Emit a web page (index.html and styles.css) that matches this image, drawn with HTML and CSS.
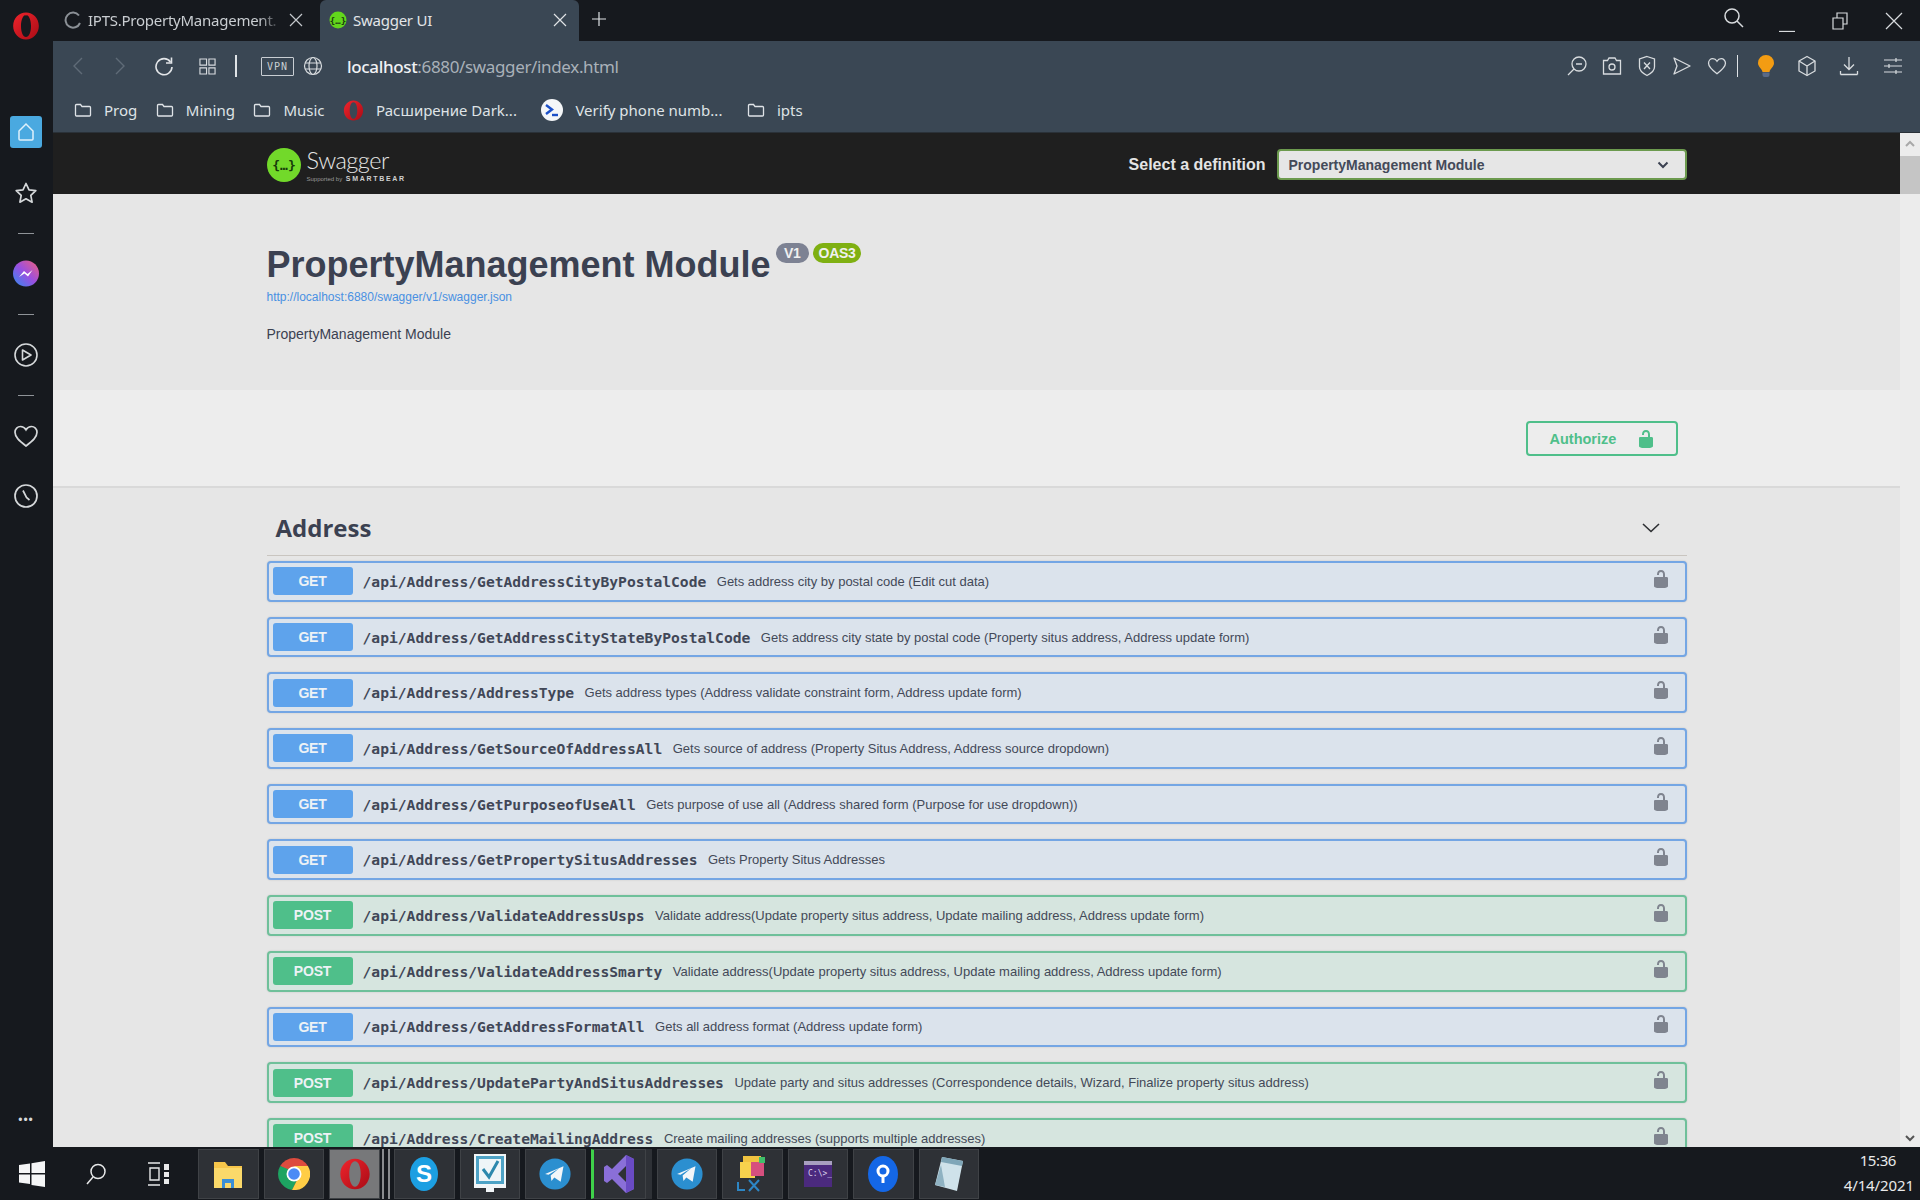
FILE: index.html
```html
<!DOCTYPE html>
<html lang="en">
<head>
<meta charset="utf-8">
<title>Swagger UI</title>
<link rel="stylesheet" href="styles.css">
</head>
<body>
<svg class="defs" aria-hidden="true">
  <defs>
    <symbol id="lock" viewBox="0 0 20 20"><path d="M15.8 8H14V5.6C14 2.703 12.665 1 10 1 7.334 1 6 2.703 6 5.6V6h2v-.801C8 3.754 8.797 3 10 3c1.203 0 2 .754 2 2.199V8H4c-.553 0-1 .646-1 1.199V17c0 .549.428 1.139.951 1.307l1.197.387C5.672 18.861 6.55 19 7.1 19h5.8c.549 0 1.428-.139 1.951-.307l1.196-.387c.524-.167.953-.757.953-1.306V9.199C17 8.646 16.352 8 15.8 8z"/></symbol>
    <symbol id="folder" viewBox="0 0 18 16"><path d="M1.500 3.500a1 1 0 0 1 1-1h4l1.500 2h7.500a1 1 0 0 1 1 1v7.500a1 1 0 0 1-1 1h-13a1 1 0 0 1-1-1z" fill="none" stroke="#dfe3e7" stroke-width="1.300"/></symbol>
    <linearGradient id="opg" x1="0" y1="0" x2="1" y2="1"><stop offset="0" stop-color="#f0242c"/><stop offset="1" stop-color="#a80c16"/></linearGradient>
    <symbol id="opera" viewBox="0 0 24 24"><path fill-rule="evenodd" fill="url(#opg)" d="M12 .5c6 0 11 5 11 11.500s-5 11.500-11 11.500S1 18.500 1 12 6 .5 12 .5zM12 2.500c-2.500 0-4.300 4-4.300 9.500s1.800 9.500 4.300 9.500 4.300-4 4.300-9.500-1.800-9.500-4.300-9.500z"/></symbol>
    <symbol id="telegram" viewBox="0 0 24 24"><circle cx="12" cy="12" r="11" fill="#2b8fd0"/><path d="M5 12l13-5.500-2 11-4.500-3-2 2.500-.6-4 6-5-7.500 4.500z" fill="#f2f6f9"/></symbol>
    <linearGradient id="msgr" x1="0" y1="1" x2="1" y2="0"><stop offset="0" stop-color="#2f8cf0"/><stop offset=".5" stop-color="#9a4fe0"/><stop offset="1" stop-color="#f0607a"/></linearGradient>
  </defs>
</svg>

<div class="screen">
  <div class="desk">
    <aside class="side">
      <div class="side-logo"><svg width="28" height="28"><use href="#opera"/></svg></div>
      <div class="side-home">
        <svg width="20" height="20" viewBox="0 0 20 20"><path d="M3 9l7-7 7 7v8a1 1 0 0 1-1 1H4a1 1 0 0 1-1-1z" fill="none" stroke="#dff1fb" stroke-width="1.500"/></svg>
      </div>
      <div class="side-item star"><svg width="24" height="24" viewBox="0 0 24 24"><path d="M12 2.500l3 6.300 6.800.9-5 4.700 1.300 6.800-6.100-3.400-6.100 3.400 1.300-6.800-5-4.700 6.800-.9z" fill="none" stroke="#d5d8da" stroke-width="1.700" stroke-linejoin="round"/></svg></div>
      <div class="side-dash"></div>
      <div class="side-item"><svg width="28" height="28" viewBox="0 0 28 28"><circle cx="14" cy="13.500" r="13" fill="url(#msgr)"/><path d="M7 17l5-6 3.500 3 5-4-4.500 6.500-3.500-3z" fill="#fff"/></svg></div>
      <div class="side-dash"></div>
      <div class="side-item"><svg width="26" height="26" viewBox="0 0 26 26"><circle cx="13" cy="13" r="11" fill="none" stroke="#d5d8da" stroke-width="1.600"/><path d="M9.500 8l8.500 5-8.500 5z" fill="none" stroke="#d5d8da" stroke-width="1.600" stroke-linejoin="round"/></svg></div>
      <div class="side-dash"></div>
      <div class="side-item"><svg width="26" height="24" viewBox="0 0 26 24"><path d="M13 22C6 16.500 2 13 2 8.300 2 4.800 4.600 2.500 7.500 2.500c2.300 0 4.300 1.300 5.500 3.300 1.200-2 3.200-3.300 5.500-3.300C21.400 2.500 24 4.800 24 8.300 24 13 20 16.500 13 22z" fill="none" stroke="#d5d8da" stroke-width="1.700"/></svg></div>
      <div class="side-item clock"><svg width="26" height="26" viewBox="0 0 26 26"><circle cx="13" cy="13" r="11" fill="none" stroke="#d5d8da" stroke-width="1.700"/><path d="M10 7.500l3.500 7 3 2.500" fill="none" stroke="#d5d8da" stroke-width="1.700"/></svg></div>
      <div class="side-more">•••</div>
    </aside>

    <main class="browser">
      <div class="tabs">
        <div class="tab">
          <svg class="tab-ico" width="18" height="18" viewBox="0 0 18 18"><path d="M15 4.500A7.500 7.500 0 1 0 16 12" fill="none" stroke="#8b9096" stroke-width="2"/></svg>
          <span class="tab-title fade">IPTS.PropertyManagement.</span>
          <svg class="tab-x" width="16" height="16" viewBox="0 0 16 16"><path d="M2 2l12 12M14 2L2 14" stroke="#c4c8cc" stroke-width="1.200"/></svg>
        </div>
        <div class="tab active">
          <svg class="tab-ico" width="18" height="18" viewBox="0 0 18 18"><circle cx="9" cy="9" r="8.500" fill="#62d61c"/><text x="9" y="12.500" class="fav-text">{…}</text></svg>
          <span class="tab-title">Swagger UI</span>
          <svg class="tab-x" width="16" height="16" viewBox="0 0 16 16"><path d="M2 2l12 12M14 2L2 14" stroke="#dfe3e6" stroke-width="1.200"/></svg>
        </div>
        <svg class="tab-new" width="16" height="16" viewBox="0 0 16 16"><path d="M8 1v14M1 8h14" stroke="#dfe3e6" stroke-width="1.200"/></svg>
        <div class="win">
          <svg class="win-search" width="22" height="22" viewBox="0 0 22 22"><circle cx="9" cy="9" r="7" fill="none" stroke="#d8dbde" stroke-width="1.500"/><path d="M14 14l6 6" stroke="#d8dbde" stroke-width="1.500"/></svg>
          <svg class="win-min" width="16" height="16" viewBox="0 0 16 16"><path d="M0 15.500h16" stroke="#d8dbde" stroke-width="1.300"/></svg>
          <svg class="win-max" width="16" height="18" viewBox="0 0 16 18"><path d="M1 6h10v11H1zM5 6V1h10v11h-4" fill="none" stroke="#d8dbde" stroke-width="1.200"/></svg>
          <svg class="win-close" width="18" height="18" viewBox="0 0 18 18"><path d="M1 1l16 16M17 1L1 17" stroke="#d8dbde" stroke-width="1.200"/></svg>
        </div>
      </div>

      <div class="chrome">
        <div class="toolbar">
          <span class="tb w42"><svg width="12" height="20" viewBox="0 0 12 20"><path d="M10 2L2 10l8 8" fill="none" stroke="#5f6b77" stroke-width="1.400"/></svg></span>
          <span class="tb w42"><svg width="12" height="20" viewBox="0 0 12 20"><path d="M2 2l8 8-8 8" fill="none" stroke="#5f6b77" stroke-width="1.400"/></svg></span>
          <span class="tb w46"><svg width="20" height="20" viewBox="0 0 20 20"><path d="M16.500 6A8 8 0 1 0 18 11" fill="none" stroke="#e2e5e8" stroke-width="1.600"/><path d="M17.500 1.500V7H12" fill="none" stroke="#e2e5e8" stroke-width="1.600"/></svg></span>
          <span class="tb w40"><svg width="17" height="17" viewBox="0 0 18 18"><path d="M1 1h7v6.500H1zM10.500 1H17v6.500h-6.500zM1 10.500h7V17H1zM10.500 10.500H17V17h-6.500z" fill="none" stroke="#d8dcdf" stroke-width="1.200"/></svg></span>
          <span class="tb w18"><span class="tb-sep"></span></span>
          <span class="vpn">VPN</span>
          <span class="tb w38"><svg width="20" height="20" viewBox="0 0 20 20"><g fill="none" stroke="#d8dcdf" stroke-width="1.200"><circle cx="10" cy="10" r="8.500"/><ellipse cx="10" cy="10" rx="4" ry="8.500"/><path d="M2 7h16M2 13h16"/></g></svg></span>
          <span class="url"><b>localhost</b>:6880/swagger/index.html</span>
          <div class="tb-right">
            <span class="tb w35"><svg width="22" height="22" viewBox="0 0 22 22"><g fill="none" stroke="#d8dcdf" stroke-width="1.300"><circle cx="13" cy="9" r="7"/><path d="M8 14l-6 6M10 9h6"/></g></svg></span>
            <span class="tb w35"><svg width="20" height="20" viewBox="0 0 20 20"><g fill="none" stroke="#d8dcdf" stroke-width="1.300"><path d="M1.500 4.500h4L7 2h6l1.500 2.500h4V18h-17z"/><circle cx="10" cy="11" r="3"/></g></svg></span>
            <span class="tb w35"><svg width="18" height="22" viewBox="0 0 18 22"><g fill="none" stroke="#d8dcdf" stroke-width="1.300"><path d="M9 1.500l7.500 2.500v8c0 4-3.500 6.500-7.500 8.500-4-2-7.500-4.500-7.500-8.500V4z"/><path d="M6 7.500l6 6.500M12 7.500L6 14"/></g></svg></span>
            <span class="tb w35"><svg width="20" height="20" viewBox="0 0 20 20"><path d="M2 2l16 8-16 8 3-8z" fill="none" stroke="#d8dcdf" stroke-width="1.300" stroke-linejoin="round"/></svg></span>
            <span class="tb w35"><svg width="20" height="20" viewBox="0 0 26 24"><path d="M13 22C6 16.500 2 13 2 8.300 2 4.800 4.600 2.500 7.500 2.500c2.300 0 4.300 1.300 5.500 3.300 1.200-2 3.200-3.300 5.500-3.300C21.400 2.500 24 4.800 24 8.300 24 13 20 16.500 13 22z" fill="none" stroke="#d8dcdf" stroke-width="1.700"/></svg></span>
            <span class="tb w7"><span class="tb-sep thin"></span></span>
            <span class="tb w49"><svg width="18" height="24" viewBox="0 0 18 24"><path d="M9 1a8 8 0 0 1 8 8c0 4-4 5.500-4.500 9h-7C5 14.500 1 13 1 9a8 8 0 0 1 8-8z" fill="#f39c12"/><path d="M5.500 18.500h7V21a2 2 0 0 1-2 2h-3a2 2 0 0 1-2-2z" fill="#5a6a86"/></svg></span>
            <span class="tb w33"><svg width="20" height="22" viewBox="0 0 20 22"><g fill="none" stroke="#d8dcdf" stroke-width="1.300" stroke-linejoin="round"><path d="M10 1.500l8 4.500v10l-8 4.500L2 16V6z"/><path d="M2 6l8 5 8-5M10 11v9.500"/></g></svg></span>
            <span class="tb w51"><svg width="20" height="20" viewBox="0 0 20 20"><path d="M10 1v12M5 8.500l5 5 5-5M1.500 18.500h17M1.500 15v3.500M18.500 15v3.500" fill="none" stroke="#d8dcdf" stroke-width="1.300"/></svg></span>
            <span class="tb w37"><svg width="18" height="18" viewBox="0 0 18 18"><path d="M0 3h18M0 9h18M0 15h18M12 1v4M5 7v4M12 13v4" fill="none" stroke="#d8dcdf" stroke-width="1.200"/></svg></span>
          </div>
        </div>
        <nav class="bookmarks">
          <span class="bm"><svg width="18" height="16"><use href="#folder"/></svg>Prog</span>
          <span class="bm"><svg width="18" height="16"><use href="#folder"/></svg>Mining</span>
          <span class="bm"><svg width="18" height="16"><use href="#folder"/></svg>Music</span>
          <span class="bm"><svg width="21" height="21"><use href="#opera"/></svg>Расширение Dark...</span>
          <span class="bm bm-gap"><svg width="22" height="22" viewBox="0 0 22 22"><circle cx="11" cy="11" r="11" fill="#f4f6f8"/><path d="M5 6l6 4.500-6 4.500" fill="none" stroke="#1c50c8" stroke-width="2.400"/><path d="M11 16h6" stroke="#1c50c8" stroke-width="2.400"/></svg>Verify phone numb...</span>
          <span class="bm bm-gap"><svg width="18" height="16"><use href="#folder"/></svg>ipts</span>
        </nav>
      </div>

      <div class="view">
        <div class="page">
          <header class="topbar">
            <div class="wrap topbar-in">
              <div class="logo">
                <svg width="34" height="34" viewBox="0 0 34 34"><circle cx="17" cy="17" r="17" fill="#72d92a"/><text x="17" y="22" class="logo-glyph">{…}</text></svg>
                <div class="logo-text">
                  <span class="logo-name">Swagger</span>
                  <span class="logo-sub"><small>Supported by</small> SMARTBEAR</span>
                </div>
              </div>
              <label class="def">
                <span class="def-label">Select a definition</span>
                <span class="select">PropertyManagement Module
                  <svg width="12" height="8" viewBox="0 0 12 8"><path d="M1.500 1.500L6 6l4.500-4.500" fill="none" stroke="#3b4151" stroke-width="2"/></svg>
                </span>
              </label>
            </div>
          </header>

          <section class="info">
            <div class="wrap">
              <h1 class="title">PropertyManagement Module<span class="badge v1">V1</span><span class="badge oas">OAS3</span></h1>
              <a class="spec-link">http://localhost:6880/swagger/v1/swagger.json</a>
              <p class="desc">PropertyManagement Module</p>
            </div>
          </section>

          <section class="schemes">
            <div class="wrap schemes-in">
              <button class="auth">Authorize<svg width="20" height="20"><use href="#lock"/></svg></button>
            </div>
          </section>

          <section class="wrap ops">
            <div class="tag">
              <h3>Address</h3>
              <svg width="20" height="20" viewBox="0 0 20 20"><path d="M2 6l8 7.500L18 6" fill="none" stroke="#2d2f33" stroke-width="1.600"/></svg>
            </div>
            <div class="op get"><span class="method">GET</span><span class="path">/api/Address/GetAddressCityByPostalCode</span><span class="sum">Gets address city by postal code (Edit cut data)</span><svg class="op-lock" width="20" height="20"><use href="#lock"/></svg></div>
            <div class="op get"><span class="method">GET</span><span class="path">/api/Address/GetAddressCityStateByPostalCode</span><span class="sum">Gets address city state by postal code (Property situs address, Address update form)</span><svg class="op-lock" width="20" height="20"><use href="#lock"/></svg></div>
            <div class="op get"><span class="method">GET</span><span class="path">/api/Address/AddressType</span><span class="sum">Gets address types (Address validate constraint form, Address update form)</span><svg class="op-lock" width="20" height="20"><use href="#lock"/></svg></div>
            <div class="op get"><span class="method">GET</span><span class="path">/api/Address/GetSourceOfAddressAll</span><span class="sum">Gets source of address (Property Situs Address, Address source dropdown)</span><svg class="op-lock" width="20" height="20"><use href="#lock"/></svg></div>
            <div class="op get"><span class="method">GET</span><span class="path">/api/Address/GetPurposeofUseAll</span><span class="sum">Gets purpose of use all (Address shared form (Purpose for use dropdown))</span><svg class="op-lock" width="20" height="20"><use href="#lock"/></svg></div>
            <div class="op get"><span class="method">GET</span><span class="path">/api/Address/GetPropertySitusAddresses</span><span class="sum">Gets Property Situs Addresses</span><svg class="op-lock" width="20" height="20"><use href="#lock"/></svg></div>
            <div class="op post"><span class="method">POST</span><span class="path">/api/Address/ValidateAddressUsps</span><span class="sum">Validate address(Update property situs address, Update mailing address, Address update form)</span><svg class="op-lock" width="20" height="20"><use href="#lock"/></svg></div>
            <div class="op post"><span class="method">POST</span><span class="path">/api/Address/ValidateAddressSmarty</span><span class="sum">Validate address(Update property situs address, Update mailing address, Address update form)</span><svg class="op-lock" width="20" height="20"><use href="#lock"/></svg></div>
            <div class="op get"><span class="method">GET</span><span class="path">/api/Address/GetAddressFormatAll</span><span class="sum">Gets all address format (Address update form)</span><svg class="op-lock" width="20" height="20"><use href="#lock"/></svg></div>
            <div class="op post"><span class="method">POST</span><span class="path">/api/Address/UpdatePartyAndSitusAddresses</span><span class="sum">Update party and situs addresses (Correspondence details, Wizard, Finalize property situs address)</span><svg class="op-lock" width="20" height="20"><use href="#lock"/></svg></div>
            <div class="op post"><span class="method">POST</span><span class="path">/api/Address/CreateMailingAddress</span><span class="sum">Create mailing addresses (supports multiple addresses)</span><svg class="op-lock" width="20" height="20"><use href="#lock"/></svg></div>
          </section>
        </div>
        <div class="scrollbar">
          <svg class="sb-arrow" width="12" height="8" viewBox="0 0 12 8"><path d="M2 6l4-4 4 4" fill="none" stroke="#a8a8a8" stroke-width="2"/></svg>
          <div class="sb-thumb"></div>
          <svg class="sb-arrow sb-down" width="12" height="8" viewBox="0 0 12 8"><path d="M2 2l4 4 4-4" fill="none" stroke="#555" stroke-width="2"/></svg>
        </div>
      </div>
    </main>
  </div>

  <footer class="taskbar">
    <span class="sys"><svg width="26" height="26" viewBox="0 0 26 26"><path d="M0 4l11-1.500V12H0zM12.500 2.300L26 0v12H12.500zM0 13.500h11V23L0 21.500zM12.500 13.500H26V26l-13.500-2z" fill="#f4f5f6"/></svg></span>
    <span class="sys"><svg width="24" height="24" viewBox="0 0 24 24"><circle cx="14" cy="9.500" r="7" fill="none" stroke="#e8e9ea" stroke-width="1.500"/><path d="M9 15l-6 7" stroke="#e8e9ea" stroke-width="1.500"/></svg></span>
    <span class="sys"><svg width="24" height="24" viewBox="0 0 24 24"><g fill="none" stroke="#e8e9ea" stroke-width="1.400"><path d="M1 1h12M1 23h12M3 6h9v12H3z"/></g><path d="M17 2h5v6h-5zM17 10h5v5h-5zM17 17h5v5h-5z" fill="#e8e9ea"/></svg></span>
    <span class="tile first"><svg width="30" height="32" viewBox="0 0 30 32"><path d="M1 4h11l3 4h14v22H1z" fill="#f7c64a"/><path d="M1 10h28v20H1z" fill="#fbd96a"/><path d="M9 30v-9h12v9h-3v-5h-6v5z" fill="#3b8fd6"/></svg></span>
    <span class="tile"><svg width="32" height="32" viewBox="0 0 32 32"><path d="M16 16L29.900 8A16 16 0 0 0 2.200 8z" fill="#dd4b3e"/><path d="M2.200 8A16 16 0 0 0 14 31.900L22 16z" fill="#1da462"/><path d="M29.900 8H16l6 8-8 15.900A16 16 0 0 0 29.900 8z" fill="#ffcd46"/><circle cx="16" cy="16" r="7.500" fill="#fff"/><circle cx="16" cy="16" r="5.800" fill="#4c8bf5"/></svg></span>
    <span class="tile act"><svg width="32" height="36"><use href="#opera"/></svg></span>
    <span class="stack"></span>
    <span class="tile"><svg width="32" height="36" viewBox="0 0 32 36"><ellipse cx="16" cy="18" rx="14" ry="17" fill="#1c9fe2"/><text x="16" y="26" class="skype">S</text></svg></span>
    <span class="tile"><svg width="32" height="40" viewBox="0 0 32 40"><path d="M0 0h32v34H0z" fill="#f2f6f8"/><path d="M2 2h28v28H2z" fill="#4ea3c6"/><path d="M5 5h22v22H5z" fill="#eef5f8"/><path d="M9 15l6 8 9-16" fill="none" stroke="#2c88ad" stroke-width="3"/><path d="M12 34h8v4h-8z" fill="#f2f6f8"/></svg></span>
    <span class="tile"><svg width="34" height="38"><use href="#telegram"/></svg></span>
    <span class="tile vs"><svg width="30" height="40" viewBox="0 0 30 40"><path d="M22 1l8 4v30l-8 4-14-14-5 4-3-2V13l3-2 5 4zM22 12l-8 8 8 8z" fill="#8a6fd8"/><path d="M22 1l8 4v30l-8 4z" fill="#6a4bc4"/></svg></span>
    <span class="stack narrow"></span>
    <span class="tile"><svg width="34" height="38"><use href="#telegram"/></svg></span>
    <span class="tile"><svg width="30" height="36" viewBox="0 0 30 36"><path d="M6 0h18v8H6z" fill="#f0c340"/><path d="M3 6h15v16H3z" fill="#f7d24d"/><path d="M14 6h13v14H14z" fill="#d64f7e"/><path d="M22 1h6v6h-6z" fill="#3fbf6a"/><path d="M1 26v8h7M12 24l10 11M22 24L12 35" fill="none" stroke="#2d86c4" stroke-width="2"/></svg></span>
    <span class="tile"><svg width="28" height="26" viewBox="0 0 28 26"><path d="M0 0h28v26H0z" fill="#4b2a7e"/><path d="M0 0h28v4H0z" fill="#a89fc0"/><text x="4" y="15" class="term">C:\&gt;_</text></svg></span>
    <span class="tile"><svg width="30" height="36" viewBox="0 0 30 36"><ellipse cx="15" cy="18" rx="15" ry="18" fill="#1467e6"/><circle cx="15" cy="15" r="5" fill="none" stroke="#fff" stroke-width="3"/><path d="M13.500 21h3v6h-3z" fill="#fff"/></svg></span>
    <span class="tile"><svg width="30" height="38" viewBox="0 0 30 38"><path d="M8 2l21 4-6 30L1 30z" fill="#cfe2ea"/><path d="M8 2l21 4-1 5L7 7z" fill="#7fa6b8"/><path d="M1 30l6-20 4 22z" fill="#8fb2c2"/></svg></span>
    <div class="clock-box"><span>15:36</span><span>4/14/2021</span></div>
  </footer>
</div>
</body>
</html>
```

FILE: styles.css
```css
* { box-sizing: border-box; }
html, body { margin: 0; padding: 0; height: 100%; overflow: hidden; }
body { background: #16191e; font-family: "Liberation Sans", Arial, sans-serif; }
.defs { width: 0; height: 0; display: block; }
svg { display: block; flex: none; }

.screen { width: 1920px; height: 1200px; display: flex; flex-direction: column; overflow: hidden; }
.desk { flex: 1; min-height: 0; display: flex; }

/* Sidebar */
.side { width: 53px; flex: none; background: #16191e; display: flex; flex-direction: column; align-items: center; padding-right: 1px; }
.side-logo { height: 52px; display: flex; align-items: center; justify-content: center; width: 100%; }
.side-home { width: 32px; height: 32px; margin-top: 64px; background: #4aa9e0; border-radius: 3px; display: flex; align-items: center; justify-content: center; }
.side-item { height: 40px; width: 100%; display: flex; align-items: center; justify-content: center; }
.star { margin-top: 25px; }
.side-dash { width: 16px; height: 1px; background: #8f9398; margin: 20px 0; }
.clock { margin-top: 20px; }
.side-more { margin-top: auto; margin-bottom: 20px; color: #d5d8da; font-size: 12px; letter-spacing: 1px; font-family: "Liberation Sans", sans-serif; }

/* Browser */
.browser { flex: 1; min-width: 0; display: flex; flex-direction: column; }
.tabs { height: 41px; flex: none; display: flex; align-items: stretch; background: #16191e; font-family: "Noto Sans", sans-serif; font-size: 15px; color: #e2e5e8; }
.tab { width: 267px; display: flex; align-items: center; padding: 0 10px 2px 11px; gap: 6px; position: relative; }
.tab.active { background: #3a4754; width: 259px; border-radius: 6px 6px 0 0; padding-left: 9px; padding-right: 11px; }
.tab-title { flex: 1; white-space: nowrap; overflow: hidden; letter-spacing: -.25px; }
.fade { color: #c9cdd1; -webkit-mask-image: linear-gradient(90deg, #000 88%, transparent 100%); mask-image: linear-gradient(90deg, #000 88%, transparent 100%); }
.tab-x { margin-right: 6px; }
.tab.active .tab-x { margin-right: 0; }
.fav-text { font: bold 9px "DejaVu Sans Mono", monospace; text-anchor: middle; fill: #1b3a10; }
.tab-new { align-self: center; margin-left: 12px; margin-top: -4px; }
.win { margin-left: auto; display: flex; align-items: center; padding-right: 17px; }
.win-search { margin-right: 34px; margin-top: -5px; }
.win-min { margin-right: 37px; margin-top: 6px; }
.win-max { margin-right: 37px; }

.chrome { height: 92px; flex: none; background: #3a4754; display: flex; flex-direction: column; border-bottom: 1px solid #2a3138; }
.toolbar { height: 50px; display: flex; align-items: center; padding-left: 4px; }
.tb { display: flex; align-items: center; justify-content: center; flex: none; height: 100%; }
.w7 { width: 7px; } .w18 { width: 18px; } .w33 { width: 33px; } .w35 { width: 35px; } .w37 { width: 37px; }
.w38 { width: 38px; } .w40 { width: 40px; } .w42 { width: 42px; } .w46 { width: 46px; } .w49 { width: 49px; } .w51 { width: 51px; }
.tb-sep { width: 2px; height: 22px; background: #dfe3e6; }
.tb-sep.thin { width: 1px; }
.vpn { margin-left: 16px; width: 33px; height: 19px; border: 1px solid #c9ced3; border-radius: 1px; color: #c9ced3; font: 10px "DejaVu Sans Mono", monospace; letter-spacing: 1px; display: flex; align-items: center; justify-content: center; }
.url { margin-left: 15px; font: 17px "Noto Sans", sans-serif; color: #a9b1b9; letter-spacing: -.35px; white-space: nowrap; }
.url b { font-weight: 500; color: #f0f2f4; }
.tb-right { margin-left: auto; display: flex; align-items: center; height: 100%; padding-right: 9px; }
.bookmarks { height: 38px; display: flex; align-items: center; padding-left: 21px; gap: 18.500px; font: 15px "Noto Sans", sans-serif; color: #dfe3e6; }
.bm { display: flex; align-items: center; gap: 12px; white-space: nowrap; }
.bm-gap { margin-left: 6px; }

/* Page */
.view { flex: 1; min-height: 0; display: flex; }
.page { flex: 1; min-width: 0; background: #e6e6e6; overflow: hidden; color: #3b4151; }
.wrap { max-width: 1460px; margin: 0 auto; padding: 0 20px; }
.topbar { height: 61px; background: #1f1f1f; }
.topbar-in { height: 100%; display: flex; align-items: center; justify-content: space-between; padding-top: 2px; }
.logo { display: flex; align-items: center; gap: 6px; }
.logo-glyph { font: bold 13px "DejaVu Sans Mono", monospace; text-anchor: middle; fill: #173b0a; }
.logo-text { display: flex; flex-direction: column; margin-top: 0; }
.logo-name { font: 300 23.500px/28px Lato, sans-serif; color: #e6e6e6; letter-spacing: -.5px; }
.logo-sub { font: bold 7px/9px "Liberation Sans", sans-serif; color: #cfcfcf; letter-spacing: 1.700px; white-space: nowrap; }
.logo-sub small { font: 6px "Liberation Sans", sans-serif; letter-spacing: 0; color: #999; }
.def { display: flex; align-items: center; gap: 11px; }
.def-label { color: #e4e4e4; font: bold 16px "Liberation Sans", sans-serif; }
.select { width: 410px; height: 31px; background: #e6e6e6; border: 2px solid #6c9a4e; border-radius: 4px; display: flex; align-items: center; justify-content: space-between; padding: 0 16px 0 10px; font: bold 14px "Liberation Sans", sans-serif; color: #444a59; }

.info { height: 196px; padding-top: 50px; }
.title { margin: 0; font: bold 36px/41px "Liberation Sans", sans-serif; color: #3b4151; display: flex; align-items: flex-start; }
.badge { font: bold 14px/20px "Liberation Sans", sans-serif; color: #f0f0f0; border-radius: 10px; height: 20px; margin-top: -1px; letter-spacing: -.3px; }
.v1 { background: #7d8293; margin-left: 5px; padding: 0 8.500px; }
.oas { background: #7fb012; margin-left: 4px; padding: 0 5.500px; }
.spec-link { display: block; margin-top: 5px; font: 12px/14px "Liberation Sans", sans-serif; color: #4990e2; }
.desc { margin: 21px 0 0; font: 14px/18px "Liberation Sans", sans-serif; }

.schemes { height: 98px; background: #ededed; border-bottom: 2px solid #d9d9d9; padding-top: 31px; }
.schemes-in { display: flex; justify-content: flex-end; }
.auth { margin-right: 9px; width: 152px; height: 35px; background: transparent; border: 2px solid #4fbf8a; border-radius: 4px; color: #4fbf8a; font: bold 14.500px "Liberation Sans", sans-serif; display: flex; align-items: center; justify-content: flex-start; gap: 20px; padding: 0 0 0 22px; }
.auth svg { fill: #4fbf8a; }

.ops { padding-top: 0; }
.tag { height: 68px; border-bottom: 1px solid #c9c5c0; display: flex; align-items: center; justify-content: space-between; padding: 12px 26px 0 9px; }
.tag h3 { margin: 0; font: 700 24px "Open Sans", sans-serif; color: #3b4151; }
.op { height: 40.700px; margin-top: 15px; border: 2px solid; border-radius: 4px; display: flex; align-items: center; padding: 0 14px 0 4px; box-shadow: 0 0 2px rgba(0,0,0,.15); }
.tag + .op { margin-top: 5px; }
.get { background: #dbe3ec; border-color: #74a6e4; }
.post { background: #d6e5df; border-color: #6fc09a; }
.method { width: 80px; height: 28px; flex: none; border-radius: 3px; color: #edf2f6; font: bold 14px/28px "Liberation Sans", sans-serif; text-align: center; letter-spacing: -.2px; }
.get .method { background: #5ea3ec; }
.post .method { background: #4fbf8a; }
.path { margin-left: 10px; font: bold 14.650px "DejaVu Sans Mono", monospace; color: #414757; white-space: nowrap; }
.sum { margin-left: 10.500px; font: 13px "Liberation Sans", sans-serif; color: #434958; white-space: nowrap; }
.op-lock { margin-left: auto; fill: #7f848f; margin-top: -5px; }

.scrollbar { width: 20px; flex: none; background: #ececec; display: flex; flex-direction: column; }
.sb-arrow { margin: 7px auto 8px; }
.sb-thumb { height: 38px; background: #c5c5c5; }
.sb-down { margin: auto auto 5px; }

/* Taskbar */
.taskbar { height: 53px; flex: none; background: #16191e; display: flex; align-items: center; }
.sys { width: 63.700px; display: flex; justify-content: center; flex: none; }
.tile { width: 60.500px; height: 50px; flex: none; background: #2e3136; border: 1px solid #3f4246; display: flex; align-items: center; justify-content: center; margin-right: 5px; }
.first { margin-left: 7px; }
.tile.act { width: 51px; background: #77787a; margin-right: 2px; }
.stack { width: 8px; height: 50px; flex: none; border-left: 2px solid #8a8c8f; border-right: 2px solid #8a8c8f; margin-right: 4px; }
.stack.narrow { width: 6px; border: 0; background: #2e3136; margin-right: 5px; margin-left: -5px; }
.tile.vs { width: 55px; border-left: 3px solid #3fd14a; }
.skype { font: bold 24px "Liberation Sans", sans-serif; text-anchor: middle; fill: #fff; }
.term { font: 8px "DejaVu Sans Mono", monospace; fill: #d8d0ea; }
.clock-box { margin-left: auto; padding: 0 6px 2px 0; display: flex; flex-direction: column; align-items: flex-end; gap: 7px; font: 15px/18px "Noto Sans", sans-serif; color: #e8e9ea; }
.clock-box span:first-child { margin-right: 18px; letter-spacing: -.4px; }
.clock-box span:last-child { letter-spacing: -.1px; }
```
